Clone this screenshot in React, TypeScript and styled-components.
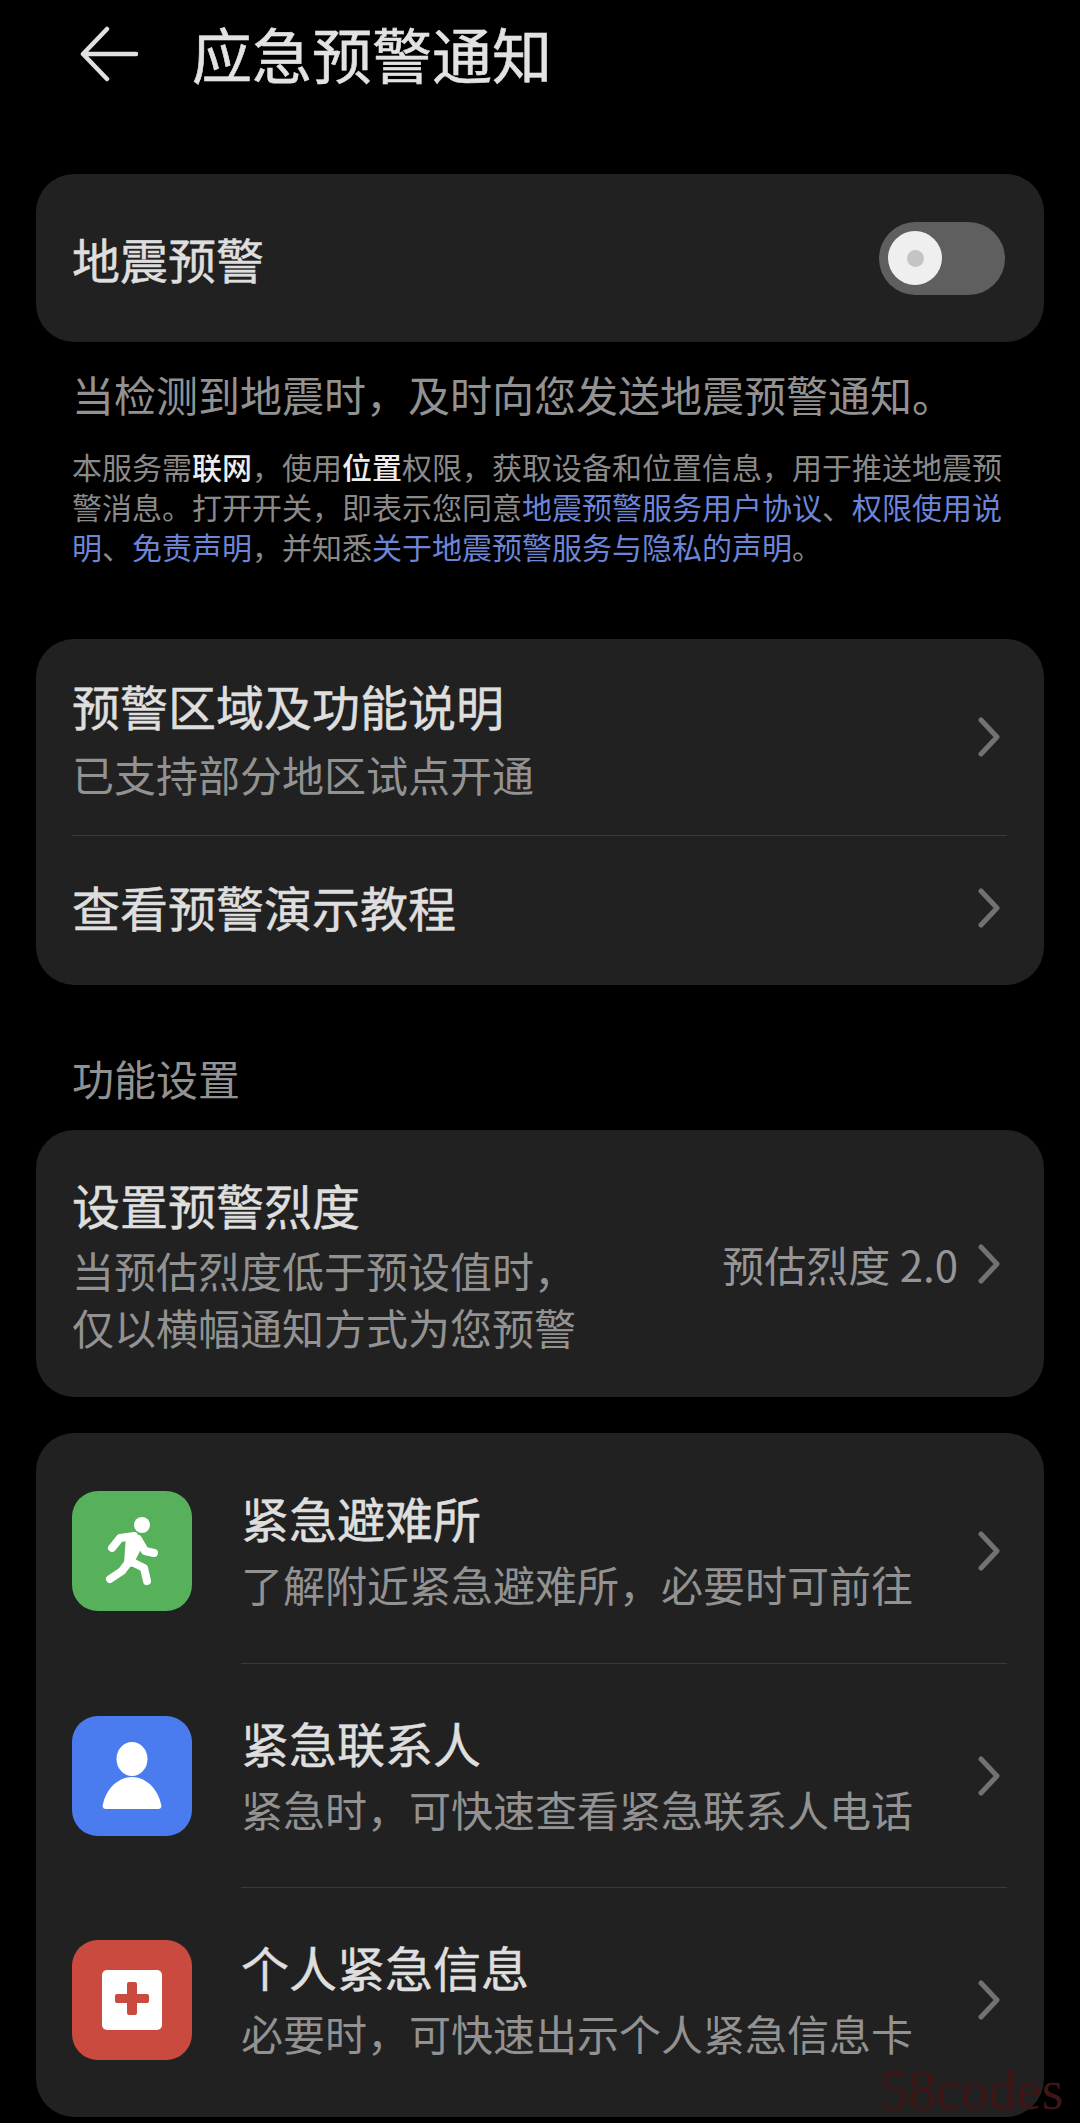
import styled, { createGlobalStyle } from 'styled-components'

const GlobalStyle = createGlobalStyle`
  html, body {
    margin: 0;
    padding: 0;
    background: #000;
  }
  * {
    box-sizing: border-box;
  }
`

const Page = styled.div`
  position: relative;
  width: 1080px;
  height: 2123px;
  overflow: hidden;
  padding: 0 36px;
  background: #000;
  font-family: 'Noto Sans CJK SC', 'Noto Sans', sans-serif;
`

const Header = styled.header`
  display: flex;
  align-items: center;
  gap: 54px;
  height: 108px;
  margin-bottom: 66px;
  padding-left: 42px;
`

const Title = styled.h1`
  margin: 0;
  padding-bottom: 2px;
  font-size: 60px;
  font-weight: 400;
  line-height: 80px;
  color: #e2e2e2;
  -webkit-text-stroke: 0.6px #e2e2e2;
`

const Card = styled.section<{ $top?: number }>`
  margin-top: ${(p) => p.$top ?? 0}px;
  border-radius: 38px;
  background: #212121;
`

const ToggleRow = styled.div`
  display: flex;
  align-items: center;
  justify-content: space-between;
  height: 168px;
  padding: 0 39px 0 36px;
`

const Toggle = styled.div`
  display: flex;
  align-items: center;
  width: 126px;
  height: 73px;
  padding-left: 9px;
  border-radius: 37px;
  background: #5f5f5f;
`

const Thumb = styled.div`
  display: flex;
  align-items: center;
  justify-content: center;
  width: 54px;
  height: 54px;
  border-radius: 50%;
  background: #efefef;

  &::after {
    content: '';
    width: 17px;
    height: 17px;
    border-radius: 50%;
    background: #c4c4c4;
  }
`

const RowTitle = styled.div`
  font-size: 48px;
  font-weight: 400;
  line-height: 64px;
  color: #dedede;
  -webkit-text-stroke: 0.5px #dedede;
`

const RowSub = styled.div<{ $top?: number }>`
  margin-top: ${(p) => p.$top ?? 8}px;
  font-size: 42px;
  line-height: 57px;
  color: #929292;
`

const Description = styled.p`
  margin: 24px 0 0;
  padding-left: 36px;
  font-size: 42px;
  line-height: 56px;
  color: #929292;
`

const Notice = styled.p`
  width: 970px;
  margin: 24px 0 73px;
  padding-left: 36px;
  font-size: 30px;
  line-height: 40px;
  color: #8a8a8a;
`

const Strong = styled.b`
  font-weight: 500;
  color: #ededed;
`

const Link = styled.span`
  color: #6c85d8;
`

const ListRow = styled.div<{ $height: number; $bottom?: number }>`
  display: flex;
  align-items: center;
  height: ${(p) => p.$height}px;
  padding: 0 37px ${(p) => p.$bottom ?? 0}px 36px;
`

const RowText = styled.div<{ $bottom?: number }>`
  flex: 1;
  min-width: 0;
  padding-bottom: ${(p) => p.$bottom ?? 0}px;
`

const Divider = styled.div<{ $left: number }>`
  height: 1px;
  margin: 0 37px 0 ${(p) => p.$left}px;
  background: #3a3a3a;
`

const SectionLabel = styled.h2`
  margin: 65px 0 24px;
  padding-left: 36px;
  font-size: 42px;
  font-weight: 400;
  line-height: 56px;
  color: #929292;
`

const Value = styled.span`
  margin-right: 20px;
  font-size: 42px;
  line-height: 57px;
  color: #969696;
`

const IconTile = styled.div<{ $color: string }>`
  flex: none;
  width: 120px;
  height: 120px;
  margin-right: 49px;
  border-radius: 26px;
  background: ${(p) => p.$color};

  svg {
    display: block;
  }
`

const ShelterList = styled.div`
  padding: 6px 0;
`

const ChevronMark = styled.svg`
  flex: none;
  margin-right: 7px;
`

const Watermark = styled.div`
  position: absolute;
  left: 880px;
  top: 2058px;
  font-family: 'Liberation Serif', serif;
  font-size: 56px;
  line-height: 64px;
  color: #3f1616;
  white-space: nowrap;
`

const Chevron = () => (
  <ChevronMark width="22" height="40" viewBox="0 0 22 40" fill="none">
    <path d="M3 3l16 17L3 37" stroke="#727272" strokeWidth="5" strokeLinecap="round" strokeLinejoin="round" />
  </ChevronMark>
)

const BackArrow = () => (
  <svg width="60" height="56" viewBox="0 0 60 56" fill="none">
    <path
      d="M29 3L5 28l24 25M5 28h53"
      stroke="#e0e0e0"
      strokeWidth="4.5"
      strokeLinecap="round"
      strokeLinejoin="round"
    />
  </svg>
)

const RunIcon = () => (
  <svg width="120" height="120" viewBox="0 0 120 120" fill="none">
    <circle cx="70" cy="34" r="8" fill="#fff" />
    <path
      d="M40 57l8-10 14-2M66 48l7 12 9 2M58 70l14 7 3 13M56 72l-6 8-12 8"
      stroke="#fff"
      strokeWidth="8"
      strokeLinecap="round"
      strokeLinejoin="round"
    />
    <path d="M54 44h10l7 10-11 22-8-3z" fill="#fff" />
  </svg>
)

const PersonIcon = () => (
  <svg width="120" height="120" viewBox="0 0 120 120" fill="none">
    <ellipse cx="60" cy="43" rx="15.5" ry="17" fill="#fff" />
    <path
      d="M34 93c-3 0-4-2-3-5 3-15 15-27 29-27s26 12 29 27c1 3 0 5-3 5z"
      fill="#fff"
    />
  </svg>
)

const MedicalIcon = () => (
  <svg width="120" height="120" viewBox="0 0 120 120" fill="none">
    <rect x="30" y="30" width="60" height="60" rx="5" fill="#fff" />
    <path
      d="M55 44a2 2 0 012-2h6a2 2 0 012 2v10h10a2 2 0 012 2v5a2 2 0 01-2 2H65v10a2 2 0 01-2 2h-6a2 2 0 01-2-2V63H45a2 2 0 01-2-2v-5a2 2 0 012-2h10z"
      fill="#cb4a3f"
    />
  </svg>
)

const SHELTER_ROWS = [
  { title: '紧急避难所', sub: '了解附近紧急避难所，必要时可前往', color: '#57b05a', icon: <RunIcon /> },
  { title: '紧急联系人', sub: '紧急时，可快速查看紧急联系人电话', color: '#4a7cf0', icon: <PersonIcon /> },
  { title: '个人紧急信息', sub: '必要时，可快速出示个人紧急信息卡', color: '#cb4a3f', icon: <MedicalIcon /> },
]

export default function App() {
  return (
    <Page>
      <GlobalStyle />
      <Header>
        <BackArrow />
        <Title>应急预警通知</Title>
      </Header>

      <Card>
        <ToggleRow>
          <RowTitle>地震预警</RowTitle>
          <Toggle>
            <Thumb />
          </Toggle>
        </ToggleRow>
      </Card>

      <Description>当检测到地震时，及时向您发送地震预警通知。</Description>
      <Notice>
        本服务需<Strong>联网</Strong>，使用<Strong>位置</Strong>权限，获取设备和位置信息，用于推送地震预警消息。打开开关，即表示您同意
        <Link>地震预警服务用户协议</Link>、<Link>权限使用说明</Link>、<Link>免责声明</Link>，并知悉
        <Link>关于地震预警服务与隐私的声明</Link>。
      </Notice>

      <Card>
        <ListRow $height={196}>
          <RowText>
            <RowTitle>预警区域及功能说明</RowTitle>
            <RowSub>已支持部分地区试点开通</RowSub>
          </RowText>
          <Chevron />
        </ListRow>
        <Divider $left={36} />
        <ListRow $height={149} $bottom={6}>
          <RowText $bottom={4}>
            <RowTitle>查看预警演示教程</RowTitle>
          </RowText>
          <Chevron />
        </ListRow>
      </Card>

      <SectionLabel>功能设置</SectionLabel>

      <Card>
        <ListRow $height={267}>
          <RowText>
            <RowTitle>设置预警烈度</RowTitle>
            <RowSub $top={5}>
              当预估烈度低于预设值时，
              <br />
              仅以横幅通知方式为您预警
            </RowSub>
          </RowText>
          <Value>预估烈度 2.0</Value>
          <Chevron />
        </ListRow>
      </Card>

      <Card $top={36}>
        <ShelterList>
          {SHELTER_ROWS.map((row, i) => (
            <div key={row.title}>
              {i > 0 && <Divider $left={205} />}
              <ListRow $height={i > 0 ? 223 : 224}>
                <IconTile $color={row.color}>{row.icon}</IconTile>
                <RowText $bottom={5}>
                  <RowTitle>{row.title}</RowTitle>
                  <RowSub $top={6}>{row.sub}</RowSub>
                </RowText>
                <Chevron />
              </ListRow>
            </div>
          ))}
        </ShelterList>
      </Card>

      <Watermark>58codes</Watermark>
    </Page>
  )
}
